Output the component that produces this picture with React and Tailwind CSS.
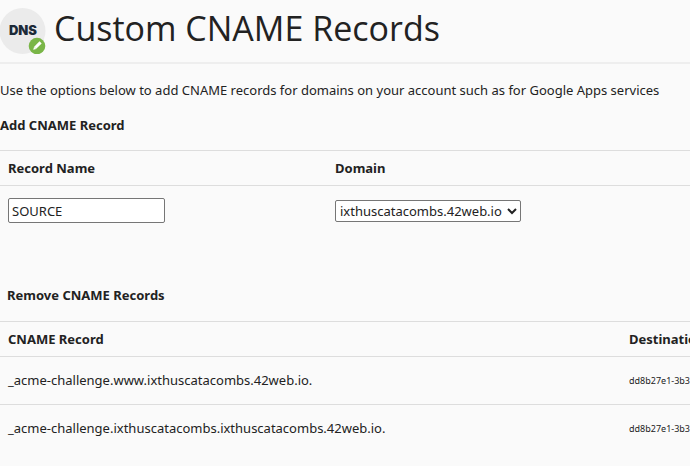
import { useState } from 'react'

const domains = ['ixthuscatacombs.42web.io']

const records = [
  { name: '_acme-challenge.www.ixthuscatacombs.42web.io.', destination: 'dd8b27e1-3b3' },
  { name: '_acme-challenge.ixthuscatacombs.ixthuscatacombs.42web.io.', destination: 'dd8b27e1-3b3' },
]

const DnsIcon = () => (
  <svg width="46" height="54" viewBox="0 0 46 54" className="shrink-0" aria-hidden="true">
    <circle cx="22.5" cy="31" r="23" fill="#ebebeb" />
    <text
      x="23"
      y="35"
      textAnchor="middle"
      fontFamily="Inter, sans-serif"
      fontSize="13"
      fontWeight="900"
      fill="#1c2a38"
    >
      DNS
    </text>
    <circle cx="37" cy="46" r="8.3" fill="#7ab648" />
    <path d="M35.2 47.8 L40.6 42.4" stroke="#fff" strokeWidth="3" />
    <path d="M34.1 46.7 L33.2 49.8 L36.3 48.9 Z" fill="#fff" />
  </svg>
)

const App = () => {
  const [recordName, setRecordName] = useState('SOURCE')
  const [domain, setDomain] = useState(domains[0])

  return (
    <div className="min-h-screen overflow-hidden bg-[#fafafa] font-['Noto_Sans',sans-serif] text-[13px] leading-5 text-[#222]">
      <header className="flex h-16 items-start gap-2 border-b-2 border-[#eee]">
        <DnsIcon />
        <h1 className="pt-2 font-['Open_Sans',sans-serif] text-[34px] leading-10">Custom CNAME Records</h1>
      </header>

      <main>
        <p className="mt-4 whitespace-nowrap">
          Use the options below to add CNAME records for domains on your account such as for Google Apps services
        </p>
        <h2 className="mt-[15px] font-bold">Add CNAME Record</h2>

        <table className="mt-[15px] w-full table-fixed border-t border-[#ddd] text-left">
          <thead>
            <tr className="border-b border-[#ddd]">
              <th className="w-[327px] px-2 py-[7px]">
                <label htmlFor="record-name">Record Name</label>
              </th>
              <th className="px-2 py-[7px]">
                <label htmlFor="domain">Domain</label>
              </th>
            </tr>
          </thead>
          <tbody>
            <tr>
              <td className="px-2 py-3">
                <input
                  type="text"
                  id="record-name"
                  className="block h-[25px] w-[157px] rounded-xs border border-[#767676] bg-white px-[3px]"
                  value={recordName}
                  onChange={(e) => setRecordName(e.target.value)}
                />
              </td>
              <td className="px-2 py-3">
                <select
                  id="domain"
                  className="block h-[22px] w-[186px] rounded-xs border border-[#767676] bg-white"
                  value={domain}
                  onChange={(e) => setDomain(e.target.value)}
                >
                  {domains.map((name) => (
                    <option key={name} value={name}>{name}</option>
                  ))}
                </select>
              </td>
            </tr>
          </tbody>
        </table>

        <h2 className="mt-[50px] px-[7px] font-bold">Remove CNAME Records</h2>

        <table className="mt-4 w-full table-fixed border-t border-[#ddd] text-left">
          <thead>
            <tr className="border-b border-[#ddd]">
              <th className="w-[90%] px-2 py-[7px]">CNAME Record</th>
              <th className="overflow-hidden py-[7px] pl-2 whitespace-nowrap">Destination</th>
            </tr>
          </thead>
          <tbody>
            {records.map((record) => (
              <tr key={record.name} className="border-b border-[#ddd] last:border-b-0">
                <td className="px-2 py-[14px] leading-[19px]">{record.name}</td>
                <td className="overflow-hidden py-[14px] pl-2 text-[9px] leading-[19px] whitespace-nowrap">
                  {record.destination}
                </td>
              </tr>
            ))}
          </tbody>
        </table>
      </main>
    </div>
  )
}

export default App
